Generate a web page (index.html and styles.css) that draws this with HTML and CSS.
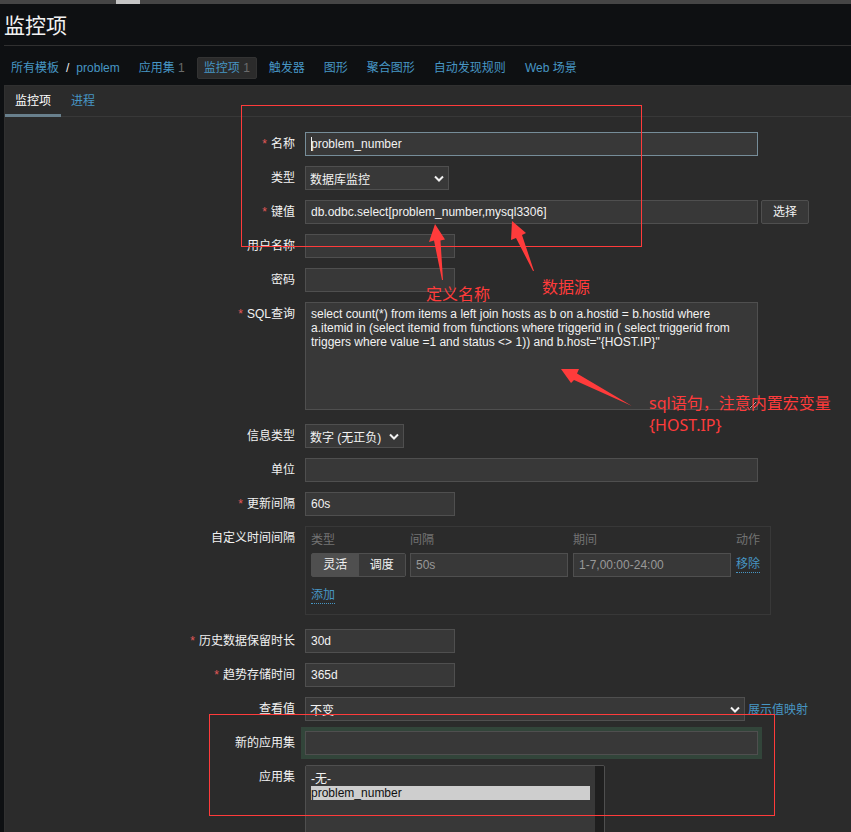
FILE: index.html
```html
<!DOCTYPE html>
<html lang="zh-CN">
<head>
<meta charset="utf-8">
<title>监控项</title>
<link rel="stylesheet" href="styles.css">
</head>
<body>
<div class="topbar"><div class="topbar-mark"></div></div>
<header class="page-head"><h1>监控项</h1></header>
<nav class="crumbs">
  <span class="crumb path"><a href="#">所有模板</a><span class="slash">/</span><a href="#">problem</a></span>
  <span class="crumb"><a href="#">应用集</a> <span class="count">1</span></span>
  <span class="crumb selected"><a href="#">监控项</a> <span class="count">1</span></span>
  <span class="crumb"><a href="#">触发器</a></span>
  <span class="crumb"><a href="#">图形</a></span>
  <span class="crumb"><a href="#">聚合图形</a></span>
  <span class="crumb"><a href="#">自动发现规则</a></span>
  <span class="crumb"><a href="#">Web 场景</a></span>
</nav>
<main class="panel">
  <div class="tabs"><a class="tab active" href="#">监控项</a><a class="tab" href="#">进程</a></div>
  <form class="form">
    <div class="row"><label class="required" for="name">名称</label>
      <div class="field"><span class="caret-box"><input id="name" class="wide focused" type="text" value="problem_number"><i class="caret"></i></span></div></div>
    <div class="row"><label for="type">类型</label>
      <div class="field"><span class="drop sel-type"><select id="type"><option>数据库监控</option></select><svg class="chevron" viewBox="0 0 10 7" aria-hidden="true"><path d="M1 1.500L5 5.500L9 1.500"/></svg></span></div></div>
    <div class="row"><label class="required" for="key">键值</label>
      <div class="field"><input id="key" class="wide" type="text" value="db.odbc.select[problem_number,mysql3306]"><button type="button" class="btn">选择</button></div></div>
    <div class="row"><label for="user">用户名称</label>
      <div class="field"><input id="user" class="small" type="text"></div></div>
    <div class="row"><label for="pass">密码</label>
      <div class="field"><input id="pass" class="small" type="text"></div></div>
    <div class="row tall"><label class="required" for="sql">SQL查询</label>
      <div class="field"><textarea id="sql" class="wide">select count(*) from items a left join hosts as b on a.hostid = b.hostid where a.itemid in (select itemid from functions where triggerid in ( select triggerid from triggers where value =1 and status &lt;&gt; 1)) and b.host="{HOST.IP}"</textarea></div></div>
    <div class="row"><label for="info">信息类型</label>
      <div class="field"><span class="drop sel-info"><select id="info"><option>数字 (无正负)</option></select><svg class="chevron" viewBox="0 0 10 7" aria-hidden="true"><path d="M1 1.500L5 5.500L9 1.500"/></svg></span></div></div>
    <div class="row"><label for="unit">单位</label>
      <div class="field"><input id="unit" class="wide" type="text"></div></div>
    <div class="row"><label class="required" for="delay">更新间隔</label>
      <div class="field"><input id="delay" class="small" type="text" value="60s"></div></div>
    <div class="row tall"><span class="label">自定义时间间隔</span>
      <div class="field">
        <div class="intervals">
          <table>
            <thead><tr><th>类型</th><th>间隔</th><th>期间</th><th>动作</th></tr></thead>
            <tbody><tr>
              <td><div class="segments">
                <input type="radio" name="kind" id="flex" checked><label for="flex">灵活</label>
                <input type="radio" name="kind" id="sched"><label for="sched">调度</label>
              </div></td>
              <td><input class="mid" type="text" placeholder="50s" aria-label="间隔"></td>
              <td><input class="mid" type="text" placeholder="1-7,00:00-24:00" aria-label="期间"></td>
              <td><button type="button" class="link-btn">移除</button></td>
            </tr></tbody>
          </table>
          <button type="button" class="link-btn add">添加</button>
        </div>
      </div></div>
    <div class="row"><label class="required" for="history">历史数据保留时长</label>
      <div class="field"><input id="history" class="small" type="text" value="30d"></div></div>
    <div class="row"><label class="required" for="trends">趋势存储时间</label>
      <div class="field"><input id="trends" class="small" type="text" value="365d"></div></div>
    <div class="row"><label for="map">查看值</label>
      <div class="field"><span class="drop sel-map"><select id="map"><option>不变</option></select><svg class="chevron" viewBox="0 0 10 7" aria-hidden="true"><path d="M1 1.500L5 5.500L9 1.500"/></svg></span><a class="after" href="#">展示值映射</a></div></div>
    <div class="row"><label for="newapp">新的应用集</label>
      <div class="field"><input id="newapp" class="wide halo" type="text"></div></div>
    <div class="row"><label for="apps">应用集</label>
      <div class="field"><div class="list-box"><select id="apps" class="list" multiple size="8"><option>-无-</option><option selected>problem_number</option></select><div class="track"></div></div></div></div>
  </form>
</main>
<div class="notes">
  <svg width="851" height="832" viewBox="0 0 851 832" aria-hidden="true">
    <g fill="none" stroke="#ff3b3b"><rect x="241.500" y="105.500" width="400" height="141"/><rect x="209.500" y="714.500" width="565" height="101"/></g>
    <g fill="#ff3b3b">
      <path d="M435 224L445 239.500L440.500 240.500L443 280L442 280L434 240.500L429 242Z"/>
      <path d="M512 221L526 233L522 235L534 271L533 271L516 238L511 240Z"/>
      <path d="M561 369L579 369L577 373.500L632 406L574 380L571 383Z"/>
    </g>
  </svg>
  <span class="note note-name">定义名称</span>
  <span class="note note-source">数据源</span>
  <span class="note note-sql">sql语句，注意内置宏变量<br>{HOST.IP}</span>
</div>
</body>
</html>
```
FILE: styles.css
```css
* { box-sizing: border-box; }
html { height: 100%; overflow: hidden; }
body {
  margin: 0;
  height: 100%;
  overflow: hidden;
  position: relative;
  display: flex;
  flex-direction: column;
  background: #0e1012;
  color: #f2f2f2;
  font: 12px/18px "Liberation Sans", "Noto Sans CJK SC", sans-serif;
}
a { color: #4796c4; text-decoration: none; }
input, select, textarea, button { font: inherit; color: inherit; margin: 0; }

.topbar { height: 4px; flex: none; background: #454545; padding-left: 116px; }
.topbar-mark { width: 24px; height: 4px; background: #c4c4c4; }

.page-head { flex: none; margin-left: 4px; height: 42px; border-bottom: 1px solid #303030; }
h1 { margin: 0; font-size: 21px; font-weight: 400; line-height: 44px; }

.crumbs { flex: none; display: flex; gap: 5px; padding: 11px 0 6px 4px; }
.crumb { height: 22px; line-height: 20px; padding: 0 6px; border: 1px solid transparent; border-radius: 2px; white-space: nowrap; }
.path { display: flex; gap: 7px; }
.selected { background: #2b2b2b; border-color: #333; }
.count { color: #6b6b6b; }

.panel { flex: 1; min-height: 0; overflow: hidden; margin-left: 4px; background: #2b2b2b; border: 1px solid #303030; border-width: 1px 0 0 1px; }
.tabs { display: flex; height: 31px; border-bottom: 1px solid #383838; }
.tab { height: 31px; line-height: 30px; padding: 0 10px; }
.active { color: #fff; border-bottom: 3px solid #69808d; }

.form { display: flex; flex-direction: column; gap: 10px; padding-top: 15px; }
.row { display: grid; grid-template-columns: 290px 1fr; column-gap: 10px; }
.tall { margin-bottom: 4px; }
.row > label, .label { text-align: right; line-height: 24px; height: 24px; }
.required::before { content: "*"; color: #e45959; margin-right: 4px; }
.field { display: flex; align-items: flex-start; gap: 3px; min-width: 0; }

input[type="text"], textarea, select {
  height: 24px;
  padding: 0 5px;
  background: #383838;
  border: 1px solid #4f4f4f;
  border-radius: 0;
  outline: none;
}
input::placeholder { color: #999; }
input.wide, textarea.wide { width: 453px; }
input.small { width: 150px; }
input.mid { display: block; width: 158px; }
input.focused { border-color: #768d99; }
input.halo { box-shadow: 0 0 0 4px #32453a; }
.caret-box { position: relative; display: flex; }
.caret { position: absolute; left: 6px; top: 5px; width: 1px; height: 14px; background: #f2f2f2; }
.drop { position: relative; display: flex; }
.drop select { appearance: none; width: 100%; padding: 3px 16px 0 4px; }
.chevron { position: absolute; right: 5px; top: 9px; width: 10px; height: 7px; fill: none; stroke: #f2f2f2; stroke-width: 2; pointer-events: none; }
.sel-type { width: 144px; }
.sel-info { width: 99px; }
.sel-map { width: 440px; }
.after { line-height: 18px; padding-top: 4px; }
textarea { display: block; line-height: 14px; padding: 4px 5px; }
textarea.wide { height: 108px; }
.btn { width: 48px; height: 24px; padding: 0; background: #383838; border: 1px solid #4f4f4f; border-radius: 2px; }

.intervals { width: 466px; border: 1px solid #383838; padding: 4px 5px 10px; }
table { border-collapse: collapse; }
th { padding: 0 0 4px; text-align: left; font-weight: 400; color: #737373; }
td { padding: 0 5px 0 0; }
td:first-child { padding-right: 4px; }
td:last-child { padding-right: 0; }
.segments { display: flex; width: 95px; height: 24px; border: 1px solid #4f4f4f; border-radius: 2px; position: relative; }
.segments input { position: absolute; opacity: 0; margin: 0; }
.segments label { flex: 1; line-height: 22px; text-align: center; background: #383838; }
.segments input:checked + label { background: #4f4f4f; }
.link-btn { display: block; height: 16px; line-height: 15px; padding: 0; background: none; border: 0; border-bottom: 1px dotted #4796c4; color: #4796c4; }
.add { margin-top: 11px; }

.list-box { display: flex; width: 300px; height: 120px; border: 1px solid #4f4f4f; border-radius: 2px; overflow: hidden; }
select.list { flex: 1; height: 100%; border: 0; padding: 3px 5px; overflow: hidden; }
.list option { padding: 0; min-height: 14px; line-height: 14px; }
.list option:checked { background: #cecece linear-gradient(#cecece, #cecece); color: #101010; }
.track { width: 9px; background: #1f1f1f; }

.notes { position: absolute; left: 0; top: 0; pointer-events: none; }
.notes svg { display: block; }
.note { position: absolute; white-space: nowrap; color: #ff3b3b; font: 16px/22px "Noto Sans", "Noto Sans CJK SC", sans-serif; }
.note-name { left: 426px; top: 283px; }
.note-source { left: 542px; top: 276px; }
.note-sql { left: 649px; top: 392px; }
```
